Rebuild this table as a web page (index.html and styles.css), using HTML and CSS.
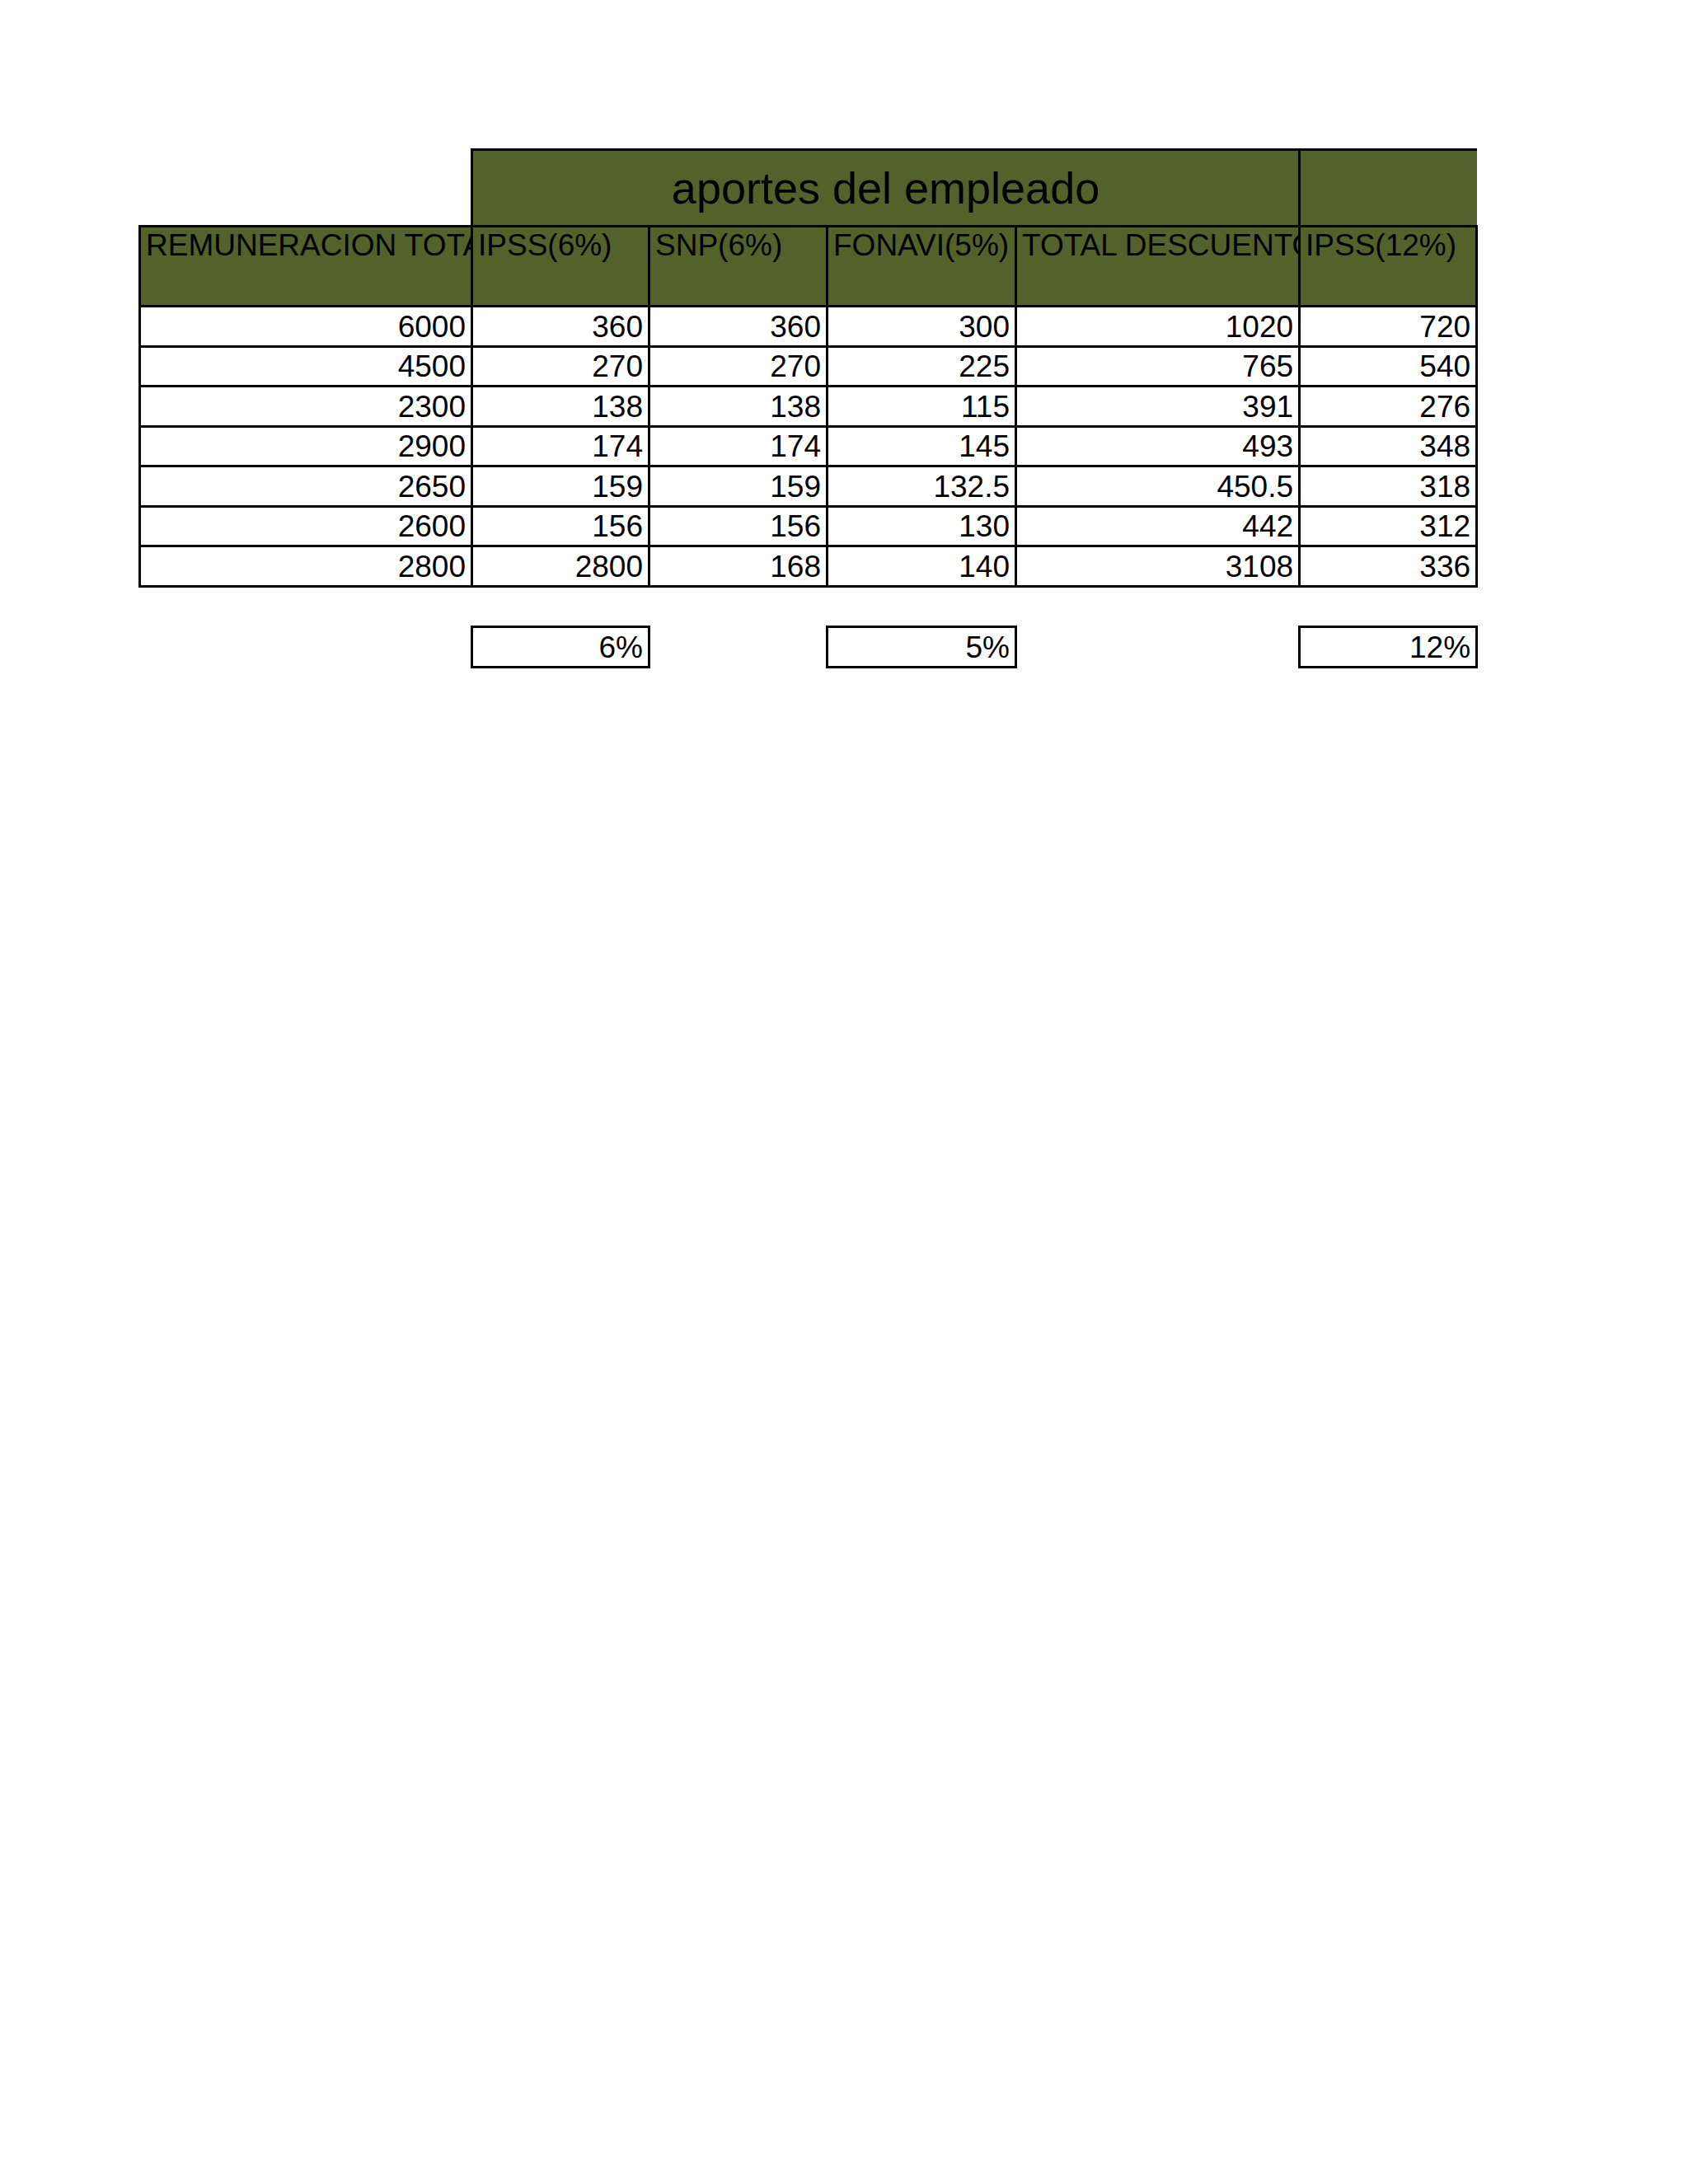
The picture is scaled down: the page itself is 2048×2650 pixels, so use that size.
FILE: index.html
```html
<!DOCTYPE html>
<html lang="es">
<head>
<meta charset="utf-8">
<title>aportes del empleado</title>
<link rel="stylesheet" href="styles.css">
</head>
<body>
<div class="sheet">
  <table class="grid">
    <colgroup>
      <col class="c-rem">
      <col class="c-ipss">
      <col class="c-snp">
      <col class="c-fon">
      <col class="c-tot">
      <col class="c-ipss12">
    </colgroup>
    <tr class="r-title">
      <td class="blank"></td>
      <td class="title" colspan="4">aportes del empleado</td>
      <td class="title-end"></td>
    </tr>
    <tr class="r-head">
      <td class="head"><div class="clip">REMUNERACION TOTAL</div></td>
      <td class="head"><div class="clip">IPSS(6%)</div></td>
      <td class="head"><div class="clip">SNP(6%)</div></td>
      <td class="head"><div class="clip">FONAVI(5%)</div></td>
      <td class="head"><div class="clip">TOTAL DESCUENTOS</div></td>
      <td class="head"><div class="clip">IPSS(12%)</div></td>
    </tr>
    <tr class="r-data r-a"><td class="num">6000</td><td class="num">360</td><td class="num">360</td><td class="num">300</td><td class="num">1020</td><td class="num">720</td></tr>
    <tr class="r-data r-b"><td class="num">4500</td><td class="num">270</td><td class="num">270</td><td class="num">225</td><td class="num">765</td><td class="num">540</td></tr>
    <tr class="r-data r-a"><td class="num">2300</td><td class="num">138</td><td class="num">138</td><td class="num">115</td><td class="num">391</td><td class="num">276</td></tr>
    <tr class="r-data r-b"><td class="num">2900</td><td class="num">174</td><td class="num">174</td><td class="num">145</td><td class="num">493</td><td class="num">348</td></tr>
    <tr class="r-data r-a"><td class="num">2650</td><td class="num">159</td><td class="num">159</td><td class="num">132.5</td><td class="num">450.5</td><td class="num">318</td></tr>
    <tr class="r-data r-b"><td class="num">2600</td><td class="num">156</td><td class="num">156</td><td class="num">130</td><td class="num">442</td><td class="num">312</td></tr>
    <tr class="r-data r-a"><td class="num">2800</td><td class="num">2800</td><td class="num">168</td><td class="num">140</td><td class="num">3108</td><td class="num">336</td></tr>
    <tr class="r-gap"><td class="blank"></td><td class="blank"></td><td class="blank"></td><td class="blank"></td><td class="blank"></td><td class="blank"></td></tr>
    <tr class="r-rate">
      <td class="blank"></td>
      <td class="num">6%</td>
      <td class="blank"></td>
      <td class="num">5%</td>
      <td class="blank"></td>
      <td class="num">12%</td>
    </tr>
  </table>
</div>
</body>
</html>
```

FILE: styles.css
```css
html, body {
  margin: 0;
  padding: 0;
  background: #ffffff;
}

body {
  min-height: 2650px;
  font-family: "Liberation Sans", Arial, sans-serif;
  color: #000000;
}

.sheet {
  padding: 180px 0 0 168px;
}

.grid {
  border-collapse: collapse;
  table-layout: fixed;
  width: 1622px;
}

.c-rem { width: 403px; }
.c-ipss { width: 215px; }
.c-snp { width: 216px; }
.c-fon { width: 229px; }
.c-tot { width: 344px; }
.c-ipss12 { width: 215px; }

.grid td {
  padding: 0;
  border: 3px solid #000000;
  font-size: 37px;
  line-height: normal;
}

.grid td.blank {
  border: none;
  background: transparent;
}

.r-title { height: 93px; }
.r-head { height: 97px; }
.r-a { height: 49px; }
.r-b { height: 48px; }
.r-gap { height: 49px; }
.r-rate { height: 49px; }

.grid td.title {
  background: #53622a;
  font-size: 54px;
  text-align: center;
  vertical-align: middle;
}

.grid td.title-end {
  background: #53622a;
  border-right: none;
}

.head {
  background: #53622a;
  vertical-align: top;
}

.clip {
  overflow: hidden;
  white-space: nowrap;
  padding: 1px 0 0 6px;
}

.grid td.num {
  background: #ffffff;
  text-align: right;
  vertical-align: bottom;
  padding: 0 6px 1px 0;
  white-space: nowrap;
}
```
